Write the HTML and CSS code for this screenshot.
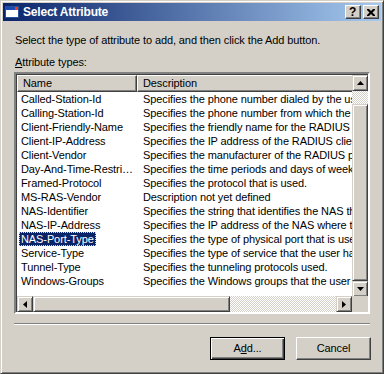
FILE: index.html
```html
<!DOCTYPE html>
<html lang="en">
<head>
    <meta charset="UTF-8">
    <title>Select Attribute</title>
    <link rel="stylesheet" href="styles.css">
</head>
<body>
    <div class="window">
        <div class="titlebar">
            <!-- icono de la ventana -->
            <svg class="app-icon" width="16" height="16" viewBox="0 0 16 16">
                <rect x="1.5" y="2.5" width="13" height="11" fill="#fff" stroke="#2a4e9a"/>
                <rect x="2" y="3" width="12" height="3" fill="#1c4bb8"/>
                <rect x="11" y="3" width="3" height="3" fill="#e04020"/>
            </svg>
            <span class="title">Select Attribute</span>
            <div class="caption-btns">
                <div class="cap-btn help">?</div>
                <div class="cap-btn">
                    <svg width="8" height="7" viewBox="0 0 8 7">
                        <path d="M0 0h2l2 2 2-2h2v1l-2.5 2.5L8 6v1H6L4 5 2 7H0V6l2.5-2.5L0 1z" fill="#000"/>
                    </svg>
                </div>
            </div>
        </div>

        <div class="content">
            <p class="intro">Select the type of attribute to add, and then click the Add button.</p>
            <p class="list-label"><u>A</u>ttribute types:</p>

            <div class="listview">
                <div class="list-body">
                    <div class="list-header">
                        <div class="col-head name-col">Name</div>
                        <div class="col-head desc-col">Description</div>
                    </div>
                    <div class="rows" id="rows"></div>
                </div>

                <div class="vscroll">
                    <div class="sb-btn">
                        <svg width="7" height="4" viewBox="0 0 7 4"><path d="M3.5 0L7 4H0z" fill="#000"/></svg>
                    </div>
                    <div class="sb-track">
                        <div class="sb-thumb vthumb"></div>
                    </div>
                    <div class="sb-btn">
                        <svg width="7" height="4" viewBox="0 0 7 4"><path d="M0 0h7L3.5 4z" fill="#000"/></svg>
                    </div>
                </div>

                <div class="hscroll">
                    <div class="sb-btn">
                        <svg width="4" height="7" viewBox="0 0 4 7"><path d="M4 0v7L0 3.5z" fill="#000"/></svg>
                    </div>
                    <div class="sb-thumb hthumb"></div>
                    <div class="sb-track"></div>
                    <div class="sb-btn">
                        <svg width="4" height="7" viewBox="0 0 4 7"><path d="M0 0l4 3.5L0 7z" fill="#000"/></svg>
                    </div>
                </div>
                <div class="corner"></div>
            </div>

            <div class="separator"></div>

            <div class="buttons">
                <div class="btn default">A<u>d</u>d...</div>
                <div class="btn">Cancel</div>
            </div>
        </div>
    </div>

    <script>
        const attributes = [
            ['Called-Station-Id', 'Specifies the phone number dialed by the user.'],
            ['Calling-Station-Id', 'Specifies the phone number from which the call originated.'],
            ['Client-Friendly-Name', 'Specifies the friendly name for the RADIUS client.'],
            ['Client-IP-Address', 'Specifies the IP address of the RADIUS client.'],
            ['Client-Vendor', 'Specifies the manufacturer of the RADIUS proxy or NAS.'],
            ['Day-And-Time-Restrictions', 'Specifies the time periods and days of week during which the user is allowed to connect.'],
            ['Framed-Protocol', 'Specifies the protocol that is used.'],
            ['MS-RAS-Vendor', 'Description not yet defined'],
            ['NAS-Identifier', 'Specifies the string that identifies the NAS that originated the request.'],
            ['NAS-IP-Address', 'Specifies the IP address of the NAS where the request originated.'],
            ['NAS-Port-Type', 'Specifies the type of physical port that is used by the NAS.'],
            ['Service-Type', 'Specifies the type of service that the user has requested.'],
            ['Tunnel-Type', 'Specifies the tunneling protocols used.'],
            ['Windows-Groups', 'Specifies the Windows groups that the user belongs to.']
        ];

        const rows = document.getElementById('rows');
        attributes.forEach(([name, desc]) => {
            const row = document.createElement('div');
            row.className = 'row';
            const selected = name === 'NAS-Port-Type' ? ' selected' : '';
            row.innerHTML = `
                <div class="cell name-cell"><span class="name-text${selected}">${name}</span></div>
                <div class="cell desc-cell">${desc}</div>
            `;
            rows.appendChild(row);
        });
    </script>
</body>
</html>
```

FILE: styles.css
```css
* {
    margin: 0;
    padding: 0;
    box-sizing: border-box;
}
body {
    font-family: 'Liberation Sans', Arial, sans-serif;
    font-size: 11px;
    letter-spacing: -0.1px;
    background-color: #d4d0c8;
    color: #000;
}
.window {
    width: 384px;
    height: 374px;
    background-color: #d4d0c8;
    border: 1px solid;
    border-color: #d4d0c8 #404040 #404040 #d4d0c8;
    box-shadow: inset 1px 1px #fff, inset -1px -1px #808080;
    padding: 2px;
    display: flex;
    flex-direction: column;
}
.titlebar {
    height: 18px;
    display: flex;
    align-items: center;
    padding: 0 2px 0 1px;
    background: linear-gradient(to right, #0a246a, #a6caf0);
    color: #fff;
}
.app-icon {
    flex-shrink: 0;
}
.title {
    margin-left: 3px;
    font-weight: bold;
    font-size: 12px;
    letter-spacing: -0.2px;
    flex: 1;
}
.caption-btns {
    display: flex;
    gap: 2px;
}
.cap-btn {
    width: 16px;
    height: 14px;
    background-color: #d4d0c8;
    border: 1px solid;
    border-color: #fff #404040 #404040 #fff;
    box-shadow: inset -1px -1px #808080;
    display: flex;
    align-items: center;
    justify-content: center;
    color: #000;
}
.cap-btn.help {
    font-weight: bold;
    font-size: 12px;
    line-height: 12px;
    padding-right: 1px;
}
.content {
    flex: 1;
    padding: 13px 11px 0 11px;
    display: flex;
    flex-direction: column;
}
.intro {
    line-height: 13px;
    padding-left: 1px;
}
.list-label {
    line-height: 13px;
    padding-left: 1px;
    margin-top: 9px;
}
.listview {
    margin-top: 3px;
    width: 356px;
    height: 242px;
    border: 2px solid;
    border-color: #808080 #fff #fff #808080;
    box-shadow: inset 1px 1px #404040, inset -1px -1px #d4d0c8;
    display: grid;
    grid-template-columns: 336px 16px;
    grid-template-rows: 222px 16px;
}
.list-body {
    background-color: #fff;
    overflow: hidden;
    margin: 1px 0 0 1px;
}
.list-header {
    display: flex;
    height: 17px;
}
.col-head {
    height: 17px;
    line-height: 15px;
    padding-left: 5px;
    background-color: #d4d0c8;
    border: 1px solid;
    border-color: #fff #404040 #404040 #fff;
    box-shadow: inset -1px -1px #808080;
    white-space: nowrap;
    flex-shrink: 0;
}
.name-col {
    width: 120px;
}
.desc-col {
    width: 400px;
}
.row {
    display: flex;
    height: 14px;
    line-height: 14px;
    white-space: nowrap;
}
.cell {
    flex-shrink: 0;
}
.name-cell {
    width: 120px;
    padding-left: 2px;
    padding-right: 3px;
    overflow: hidden;
    text-overflow: ellipsis;
}
.name-text {
    padding: 0 2px;
}
.name-text.selected {
    background-color: #0a246a;
    color: #fff;
    outline: 1px dotted #e8d8a0;
    outline-offset: -1px;
    display: inline-block;
    height: 14px;
}
.desc-cell {
    padding-left: 6px;
}
.vscroll {
    display: flex;
    flex-direction: column;
    margin-top: 1px;
}
.hscroll {
    display: flex;
    margin-left: 1px;
}
.sb-btn {
    width: 16px;
    height: 16px;
    flex-shrink: 0;
    background-color: #d4d0c8;
    border: 1px solid;
    border-color: #d4d0c8 #404040 #404040 #d4d0c8;
    box-shadow: inset 1px 1px #fff, inset -1px -1px #808080;
    display: flex;
    align-items: center;
    justify-content: center;
}
.sb-track {
    flex: 1;
    background: repeating-conic-gradient(#d4d0c8 0 25%, #fff 0 50%) 0 0 / 2px 2px;
}
.sb-thumb {
    background-color: #d4d0c8;
    border: 1px solid;
    border-color: #d4d0c8 #404040 #404040 #d4d0c8;
    box-shadow: inset 1px 1px #fff, inset -1px -1px #808080;
}
.vthumb {
    margin-top: 13px;
    height: 177px;
}
.hthumb {
    width: 197px;
    flex-shrink: 0;
}
.corner {
    background-color: #d4d0c8;
}
.separator {
    margin-top: 9px;
    height: 2px;
    border-top: 1px solid #808080;
    border-bottom: 1px solid #fff;
}
.buttons {
    margin-top: 12px;
    margin-right: -1px;
    display: flex;
    justify-content: flex-end;
    gap: 11px;
}
.btn {
    width: 75px;
    height: 23px;
    line-height: 21px;
    text-align: center;
    background-color: #d4d0c8;
    border: 1px solid;
    border-color: #fff #404040 #404040 #fff;
    box-shadow: inset -1px -1px #808080;
}
.btn.default {
    border-color: #000;
    box-shadow: inset 1px 1px #fff, inset -1px -1px #404040, inset -2px -2px #808080;
}
```
